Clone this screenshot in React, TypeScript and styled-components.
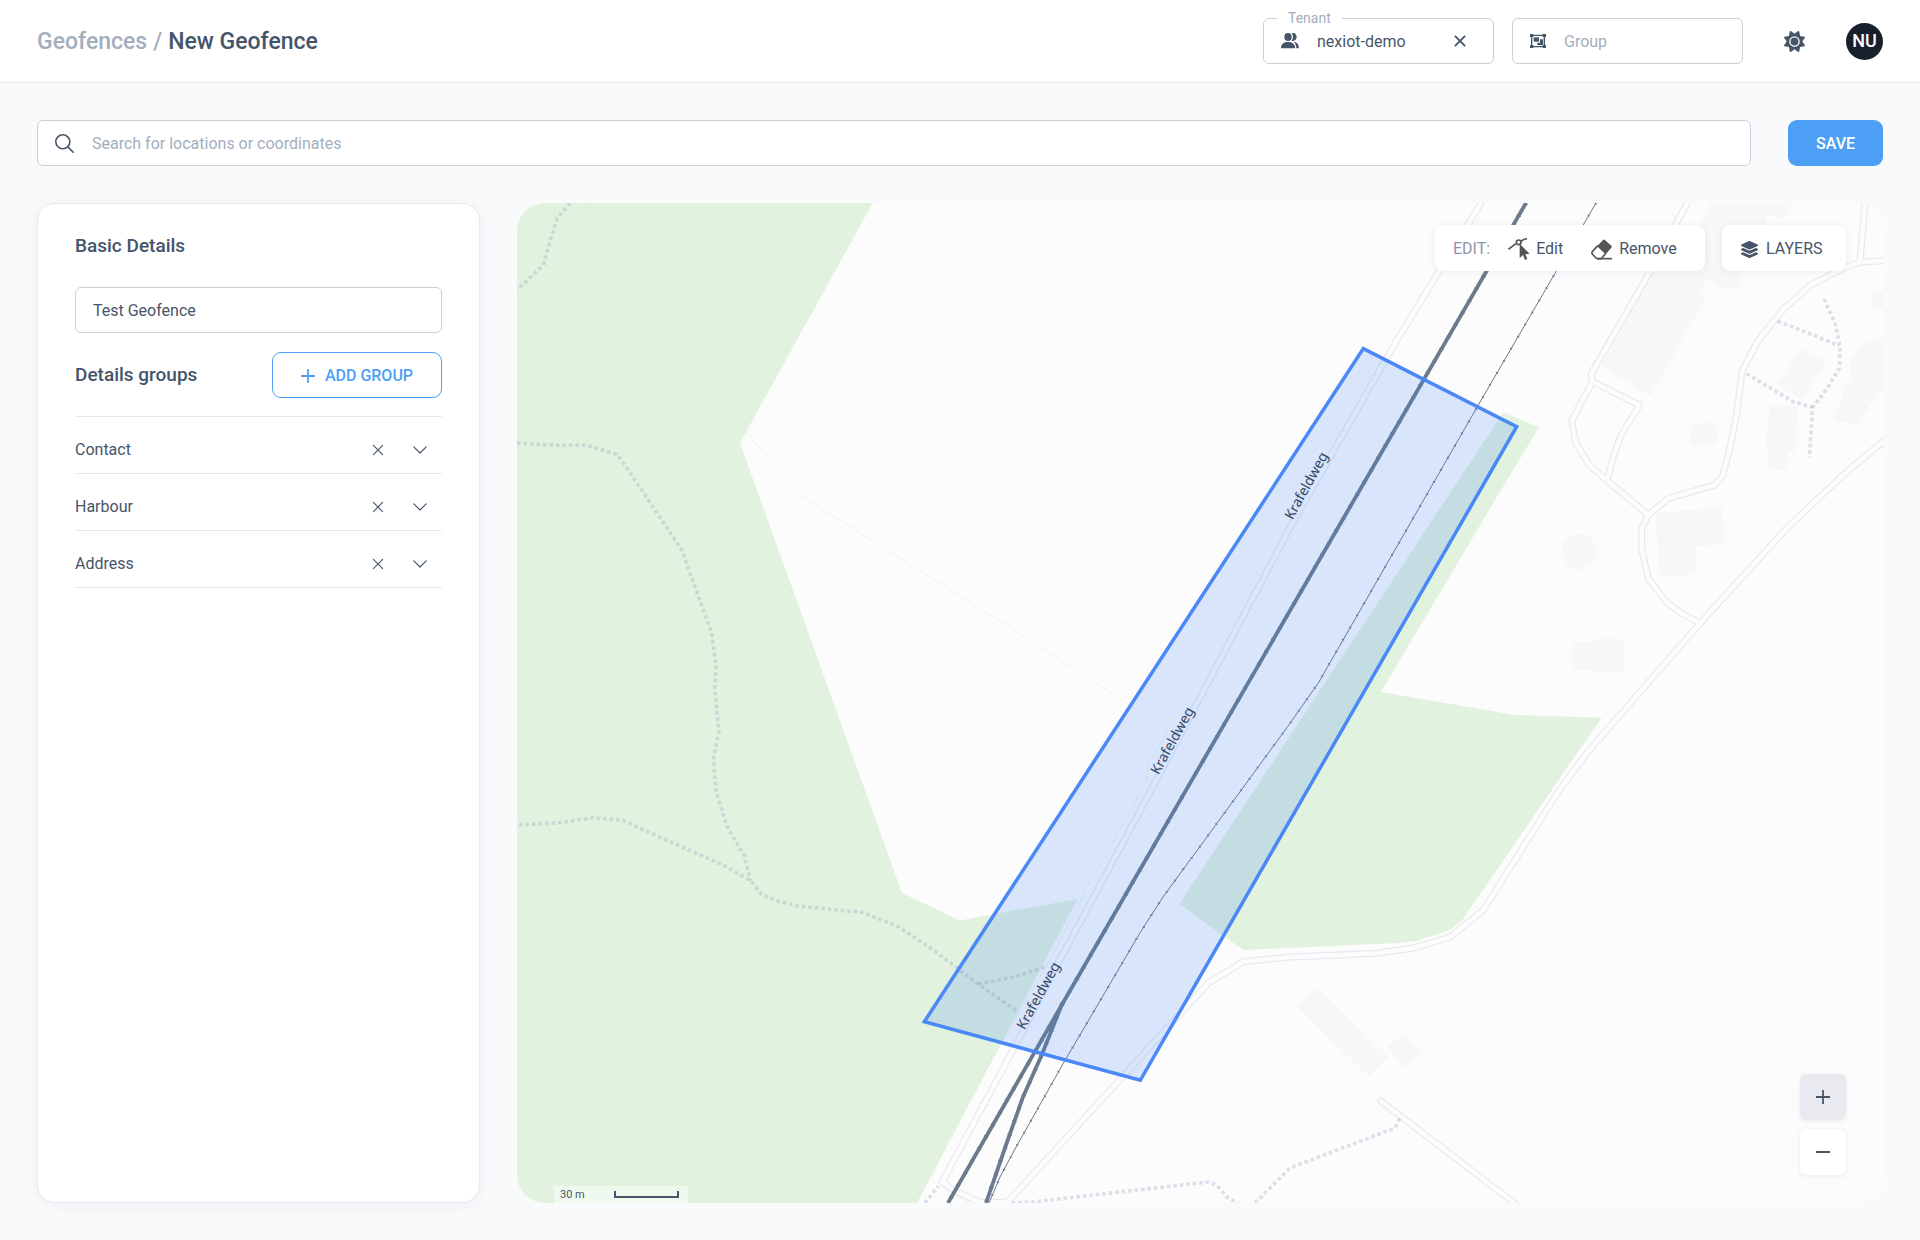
import React, { useState } from "react";
import styled, { createGlobalStyle } from "styled-components";
import { FaSun } from "react-icons/fa6";
import { FaLayerGroup } from "react-icons/fa";

const color = {
  text: "#475569",
  heading: "#44546a",
  muted: "#a3aebd",
  border: "#c8d0da",
  line: "#e6e9f0",
  page: "#f9fafc",
  primary: "#4d9ff6",
  white: "#ffffff",
};

const GlobalStyle = createGlobalStyle`
  *, *::before, *::after { box-sizing: border-box; }
  body {
    margin: 0;
    background: ${color.page};
    color: ${color.text};
    font-family: Roboto, "Liberation Sans", sans-serif;
    font-size: 16px;
    line-height: 24px;
  }
  button, input { font: inherit; color: inherit; }
  button { cursor: pointer; }
  svg { display: block; flex: none; }
`;

const Page = styled.div`
  display: flex;
  flex-direction: column;
  min-height: 100vh;
`;

const Header = styled.header`
  display: flex;
  align-items: center;
  justify-content: space-between;
  height: 83px;
  padding: 0 37px;
  background: ${color.white};
  border-bottom: 1px solid ${color.line};
`;

const Breadcrumb = styled.nav`
  display: flex;
  gap: 6px;
  padding-top: 2px;
  font-size: 23px;
  font-weight: 500;
  line-height: 28px;
  color: ${color.muted};
`;

const CrumbLink = styled.a`
  color: inherit;
  text-decoration: none;
`;

const PageTitle = styled.h1`
  margin: 0;
  font: inherit;
  color: ${color.heading};
`;

const HeaderTools = styled.div`
  display: flex;
  align-items: center;
  gap: 18px;
`;

const Field = styled.div<{ $width?: string }>`
  position: relative;
  display: flex;
  align-items: center;
  gap: 18px;
  width: ${(p) => p.$width ?? "100%"};
  height: 46px;
  padding: 0 18px 0 17px;
  background: ${color.white};
  border: 1px solid ${color.border};
  border-radius: 6px;
`;

const FloatingLabel = styled.label`
  position: absolute;
  top: -10px;
  left: 13px;
  padding: 0 11px;
  background: ${color.white};
  color: ${color.muted};
  font-size: 14px;
  line-height: 18px;
`;

const TextInput = styled.input`
  flex: 1;
  width: 0;
  min-width: 0;
  height: 100%;
  padding: 0;
  border: 0;
  outline: 0;
  background: transparent;
  &::placeholder {
    color: ${color.muted};
    opacity: 1;
  }
`;

const IconButton = styled.button<{ $size: number }>`
  display: flex;
  align-items: center;
  justify-content: center;
  width: ${(p) => p.$size}px;
  height: ${(p) => p.$size}px;
  padding: 0;
  border: 0;
  border-radius: 50%;
  background: transparent;
`;

const Account = styled.div`
  display: flex;
  align-items: center;
  gap: 29px;
  padding-left: 10px;
`;

const Avatar = styled.button`
  width: 37px;
  height: 37px;
  padding: 0;
  border: 0;
  border-radius: 50%;
  background: #18202b;
  color: ${color.white};
  font-size: 18px;
  font-weight: 500;
`;

const Main = styled.main`
  flex: 1;
  display: flex;
  flex-direction: column;
  gap: 37px;
  padding: 37px;
`;

const SearchRow = styled.form`
  display: flex;
  gap: 37px;
`;

const SaveButton = styled.button`
  flex: none;
  width: 95px;
  height: 46px;
  padding: 2px 0 0;
  border: 0;
  border-radius: 9px;
  background: ${color.primary};
  color: ${color.white};
  font-weight: 500;
`;

const Workspace = styled.div`
  flex: 1;
  display: grid;
  grid-template-columns: 443px minmax(0, 1fr);
  gap: 37px;
`;

const Panel = styled.section`
  padding: 29px 37px;
  background: ${color.white};
  border: 1px solid ${color.line};
  border-radius: 18px;
  box-shadow: 0 2px 18px rgba(30, 41, 59, 0.05);
`;

const PanelHeading = styled.h2`
  margin: 0;
  font-size: 19px;
  font-weight: 500;
  line-height: 26px;
  color: ${color.heading};
`;

const NameField = styled.div`
  padding: 28px 0 19px;
`;

const GroupsHeader = styled.div`
  display: flex;
  align-items: center;
  justify-content: space-between;
`;

const AddGroupButton = styled.button`
  display: flex;
  align-items: center;
  justify-content: center;
  gap: 10px;
  width: 170px;
  height: 46px;
  padding: 2px 0 0;
  border: 1px solid ${color.primary};
  border-radius: 9px;
  background: ${color.white};
  color: ${color.primary};
  font-weight: 500;
`;

const GroupList = styled.ul`
  margin: 18px 0 0;
  padding: 0;
  list-style: none;
  border-top: 1px solid ${color.line};
`;

const GroupRow = styled.li`
  display: flex;
  align-items: center;
  gap: 18px;
  height: 57px;
  padding: 10px 10px 0 0;
  border-bottom: 1px solid ${color.line};
`;

const GroupName = styled.span`
  flex: 1;
`;

const MapFrame = styled.section`
  position: relative;
  overflow: hidden;
  border-radius: 28px;
  background: #fcfcfd;
`;

const MapCanvas = styled.svg`
  position: absolute;
  inset: 0;
  width: 100%;
  height: 100%;
`;

const MapLabel = styled.text`
  font-family: "Noto Sans", sans-serif;
  font-size: 14px;
  fill: #33455f;
  text-anchor: middle;
`;

const MapTopBar = styled.div`
  position: absolute;
  top: 22px;
  right: 37px;
  display: flex;
  gap: 17px;
`;

const Card = styled.div`
  display: flex;
  align-items: center;
  height: 46px;
  border-radius: 9px;
  background: ${color.white};
  box-shadow: 0 1px 8px rgba(30, 41, 59, 0.07);
`;

const EditCard = styled(Card)`
  gap: 18px;
  width: 270px;
  padding: 2px 18px 0;
`;

const EditCaption = styled.span`
  color: #8b97a8;
`;

const ToolButton = styled.button`
  display: flex;
  align-items: center;
  gap: 6px;
  padding: 0;
  border: 0;
  background: transparent;
  & + & {
    margin-left: 10px;
  }
`;

const LayersButton = styled(Card).attrs({ as: "button" })`
  gap: 8px;
  width: 124px;
  padding: 2px 19px 0;
  border: 0;
`;

const ZoomControls = styled.div`
  position: absolute;
  right: 37px;
  bottom: 28px;
  display: flex;
  flex-direction: column;
  gap: 9px;
`;

const ZoomButton = styled.button<{ $active?: boolean }>`
  display: flex;
  align-items: center;
  justify-content: center;
  width: 46px;
  height: 46px;
  padding: 0;
  border: 0;
  border-radius: 6px;
  background: ${(p) => (p.$active ? "#e8eaf0" : color.white)};
  box-shadow: 0 1px 5px rgba(30, 41, 59, 0.08);
`;

const ScaleBox = styled.div`
  position: absolute;
  left: 37px;
  bottom: 0;
  display: flex;
  align-items: center;
  justify-content: space-between;
  width: 134px;
  height: 17px;
  padding: 0 9px 0 6px;
  background: rgba(255, 255, 255, 0.5);
  font-size: 11px;
  line-height: 17px;
  color: #4b5563;
`;

const ScaleBar = styled.span`
  width: 65px;
  height: 7px;
  border: 2px solid ${color.text};
  border-top: 0;
`;

/* ---------- icons ---------- */

const PeopleIcon = () => (
  <svg width="18" height="16" viewBox="0 0 54 48" fill="currentColor" aria-hidden="true">
    <ellipse cx="21" cy="12" rx="11" ry="12" />
    <path d="M0 46C0 32 9 27 21 27s21 5 21 19z" />
    <path d="M32 1c8-3 15 3 15 11s-7 14-15 11c5-6 5-16 0-22z" />
    <path d="M38 27c10 1 16 7 16 19h-8c0-9-3-15-8-19z" />
  </svg>
);

const GroupIcon = () => (
  <svg width="16" height="14" viewBox="0 0 48 42" fill="currentColor" aria-hidden="true">
    <path d="M5 4h38v34H5z" fill="none" stroke="currentColor" strokeWidth="4" />
    <path d="M0 0h10v9H0zM38 0h10v9H38zM0 33h10v9H0zM38 33h10v9H38z" />
    <path d="M11 10h16v13H11z" />
    <path d="M30 16h9v17H22v-7h8z" />
  </svg>
);

const SearchIcon = () => (
  <svg width="19" height="19" viewBox="0 0 19 19" fill="none" stroke="currentColor" strokeWidth="1.6" strokeLinecap="round" aria-hidden="true">
    <circle cx="7.8" cy="7.8" r="7" />
    <path d="M12.9 12.9l5.3 5.3" />
  </svg>
);

const CrossIcon = ({ weight }: { weight: number }) => (
  <svg width="12" height="12" viewBox="0 0 12 12" fill="none" stroke="currentColor" strokeWidth={weight} strokeLinecap="round" aria-hidden="true">
    <path d="M1.4 1.4l9.2 9.2M10.6 1.4l-9.2 9.2" />
  </svg>
);

const ChevronIcon = () => (
  <svg width="14" height="8" viewBox="0 0 14 8" fill="none" stroke="currentColor" strokeWidth="1.2" strokeLinecap="round" strokeLinejoin="round" aria-hidden="true">
    <path d="M.8.8L7 7 13.2.8" />
  </svg>
);

const PlusIcon = ({ size, minus }: { size: number; minus?: boolean }) => (
  <svg width={size} height={size} viewBox="0 0 14 14" fill="none" stroke="currentColor" strokeWidth="1.8" aria-hidden="true">
    <path d={minus ? "M0 7h14" : "M0 7h14M7 0v14"} />
  </svg>
);

const EditVertexIcon = () => (
  <svg width="22" height="22" viewBox="0 0 66 66" fill="#555" aria-hidden="true">
    <path d="M1 34c8-5 15-11 22-17M39 10c5-5 10-7 18-8" fill="none" stroke="#555" strokeWidth="5" />
    <path d="M35 18v42l10-9 6 15 7-3-6-14 13-2z" />
    <circle cx="32" cy="13" r="7" fill="#fff" stroke="#555" strokeWidth="5" />
  </svg>
);

const EraserIcon = () => (
  <svg width="22" height="21" viewBox="0 0 66 63" aria-hidden="true">
    <path d="M36 3q3-3 6 0l19 17q3 3 0 6L44 46 18 22z" fill="#555" />
    <path d="M20 20L4 38q-3 4 0 7l11 12q2 2 5 2h11l13-16" fill="none" stroke="#555" strokeWidth="5" strokeLinejoin="round" />
    <path d="M18 59h45" stroke="#555" strokeWidth="5" />
  </svg>
);

/* ---------- map data ---------- */

const woods = [
  "517,203 872.7,203 740,443 902,893 960,920.4 1077.5,899 917,1203 517,1203",
  "1503.3,412.3 1539,427.3 1495,500 1400,660 1381,692 1515,715 1601.7,717.7 1461.7,920.7 1450,930 1416.7,940.7 1400,943 1243.3,950 1179.3,904",
];

const buildings = [
  "1711,203 1791.7,203 1785,219 1766.7,214 1766,223 1741,275 1739,290 1720,287 1706,278 1700,291.7 1706,296.7 1650.7,395.7 1601,366.7 1651,276 1700,225",
  "1801.7,347.3 1826,362.3 1801.7,400 1777.3,384.3",
  "1770,404.3 1799,407.3 1794.3,452.3 1788.3,452.3 1786.7,470.7 1768.3,469 1769.3,450.7 1765,450",
  "1691.7,424.3 1701.7,425.7 1702.7,422.3 1715.7,423.3 1715,430 1719,431 1717.3,444 1701.7,442.7 1701,446 1690,445",
  "1883,338.3 1861,343.3 1849.3,362.3 1852.7,383.3 1845,386 1834,420 1860,425 1862.3,413.3 1866.7,414.3 1870,403.3 1873.3,404 1876,393.3 1883,391.7",
  "1872.3,292.3 1883,292 1883,309 1872.3,307.7",
  "1655,512.7 1721.7,507.3 1725,543.3 1695,546.7 1697.3,574.3 1660,577.3",
  "1579,533.3 1591,537.3 1597,551.7 1592.7,564.3 1579,570.3 1566.7,565 1560.7,551.7 1565,539.3",
  "1572.7,642.3 1591.7,642.3 1591.7,640.7 1602.7,640.7 1602.7,638 1613.3,638 1613.3,640.7 1624.7,640.7 1624.7,671 1591.7,671 1591.7,669.7 1572.7,669.7",
  "1317.7,987.3 1388.3,1056.7 1368.3,1076 1297.7,1006.7",
  "1403.3,1033.3 1421.7,1051.7 1404.3,1066.7 1386.7,1048.3",
];

const roads = [
  "1481,203 1397,340 1293,522 1193,711 1157,779 1103,880 1057,965 1020,1037 942.3,1181.7 953.3,1190 978,1201.7 1006.7,1202.5",
  "1004,1206 1186.7,1006.7 1208,983.3 1243.3,961.7 1286.7,957.3 1376.7,953.3 1415,947.7 1450.7,936.7 1483.3,910 1558.3,791.7 1586.7,753.3 1700,623.3 1788.3,526.7 1845,473.3 1885,440",
  "1689,200 1650,271.7 1591,374.3 1592.7,381.7 1571.7,420.7 1575.7,442.7 1589.3,465 1607.3,481 1628.3,498 1648.3,515",
  "1592.7,381.7 1639.3,405 1620.7,436 1613.3,456.7 1607.3,480",
  "1865.3,200 1860,262.3",
  "1886,260.5 1860,262.3 1846.7,266.7 1810.7,285 1783.3,309.3 1757.3,341.7 1742,371.7 1736.7,413.3 1731.7,440 1722.7,476 1714,485.3 1668.3,498.3 1648.3,515 1641.7,528.3 1641.7,549.3 1648.3,578.3 1667.7,603.3 1681.7,613.3 1700,623.3",
  "1380.7,1101 1517,1205",
];

const footpaths = [
  "570,203 557.3,218.3 550,241.7 543.3,265 517,290",
  "517,443 556.7,445.3 586.7,445.3 616.7,454.3 625,465 681.7,550 711.7,633.3 716,666.7 714.7,686.7 716.7,710 719,731.7 713.3,758.5 716,791 726.7,825.7 744,855 750.7,880.8",
  "519,824.7 556.7,823 593.3,817.8 623.3,820.5 651.7,833.6 721.7,864.3 750.7,880.8 761.7,894.6 776.7,900.8 798,906 863,912.5 898,926.6 933,949.7 976.7,983 1018,1012",
  "978.3,984 1015,976.7 1048,966",
  "925,1203 938.3,1186",
  "1011.7,1203 1033,1202 1066.7,1198 1208,1182 1216.7,1185 1228,1198 1238,1203",
  "1255,1203 1290,1168 1395,1128 1400,1118",
  "1824,299 1835,323 1840,346.7 1839.3,368.3 1828.3,386.7 1812.7,407.3 1809.3,457.3",
  "1777.7,321.3 1813.3,335 1839,345.7",
  "1746.7,373.7 1793.3,401.7 1812.7,407.3",
];

const boundary =
  "590,203 597,238 605.7,263 657,324 675,360 700,380 745.7,431.7 800,495 1020,634 1130,705 1153,719 1168,731 1147,765 1146,783 1091,880 1057,947 943,1143 932,1180 968,1203";

const mainRails = [
  "1526,203 1134,880 1060,1008 948,1203",
  "1062,1004 1041.7,1055 1023,1097 1006.7,1143 986,1203",
];

const sideRail =
  "1596,203 1478.3,405 1318.3,683 1287,727.5 1163,897 1140.7,931.7 1063.3,1063.3 1015,1149 1000,1177 989,1203";

const geofence = "1363.3,348.6 1516.7,426.7 1140.3,1080.3 924.3,1021.7";

const streetLabels = [
  [1307, 486],
  [1173, 741],
  [1039, 996],
];

const MapDrawing = () => (
  <MapCanvas viewBox="517 203 1366 1000" preserveAspectRatio="xMidYMid slice" role="img" aria-label="Map with geofence">
    <g fill="#f7f7f8">
      {buildings.map((p) => <polygon key={p} points={p} />)}
    </g>
    <g fill="#e1f2de">
      {woods.map((p) => <polygon key={p} points={p} />)}
    </g>
    <polyline points={boundary} fill="none" stroke="#dcebc8" strokeOpacity="0.6" strokeWidth="1" strokeDasharray="2 1" />
    <g fill="none" stroke="#e8e8f0" strokeWidth="7" strokeLinejoin="round" strokeLinecap="round">
      {roads.map((p) => <polyline key={p} points={p} />)}
    </g>
    <g fill="none" stroke="#fcfcfd" strokeWidth="4.6" strokeLinejoin="round" strokeLinecap="round">
      {roads.map((p) => <polyline key={p} points={p} />)}
    </g>
    <g fill="none" stroke="#97a3ba" strokeOpacity="0.32" strokeWidth="3.6" strokeDasharray="3.6 2.9">
      {footpaths.map((p) => <polyline key={p} points={p} />)}
    </g>
    <g fill="none" stroke="#6b7a8e">
      {mainRails.map((p) => <polyline key={p} points={p} strokeWidth="3.8" />)}
      {mainRails.map((p) => <polyline key={p} points={p} strokeWidth="4.4" strokeDasharray="1.4 12.6" />)}
      <polyline points={sideRail} strokeWidth="1" />
      <polyline points={sideRail} strokeWidth="2.4" strokeDasharray="1.2 12.8" />
    </g>
    <polygon points={geofence} fill="#3b82f6" fillOpacity="0.18" stroke="#4a88f8" strokeWidth="3.5" />
    {streetLabels.map(([x, y]) => (
      <MapLabel key={y} transform={`translate(${x} ${y}) rotate(-61)`} y="4">
        Krafeldweg
      </MapLabel>
    ))}
  </MapCanvas>
);

export default function App() {
  const [tenant, setTenant] = useState("nexiot-demo");
  const [name, setName] = useState("Test Geofence");
  const [groups, setGroups] = useState(["Contact", "Harbour", "Address"]);

  return (
    <Page>
      <GlobalStyle />
      <Header>
        <Breadcrumb aria-label="Breadcrumb">
          <CrumbLink href="#geofences">Geofences</CrumbLink>
          <span>/</span>
          <PageTitle>New Geofence</PageTitle>
        </Breadcrumb>
        <HeaderTools>
          <Field $width="231px">
            <FloatingLabel htmlFor="tenant">Tenant</FloatingLabel>
            <PeopleIcon />
            <TextInput id="tenant" value={tenant} onChange={(e) => setTenant(e.target.value)} />
            <IconButton $size={30} type="button" aria-label="Clear tenant" onClick={() => setTenant("")}>
              <CrossIcon weight={1.9} />
            </IconButton>
          </Field>
          <Field $width="231px">
            <GroupIcon />
            <TextInput aria-label="Group" placeholder="Group" />
          </Field>
          <Account>
            <IconButton $size={46} type="button" aria-label="Toggle theme">
              <FaSun size={21} />
            </IconButton>
            <Avatar type="button" aria-label="Account">NU</Avatar>
          </Account>
        </HeaderTools>
      </Header>

      <Main>
        <SearchRow onSubmit={(e) => e.preventDefault()}>
          <Field>
            <SearchIcon />
            <TextInput aria-label="Search" placeholder="Search for locations or coordinates" />
          </Field>
          <SaveButton type="submit">SAVE</SaveButton>
        </SearchRow>

        <Workspace>
          <Panel>
            <PanelHeading>Basic Details</PanelHeading>
            <NameField>
              <Field>
                <TextInput aria-label="Geofence name" value={name} onChange={(e) => setName(e.target.value)} />
              </Field>
            </NameField>
            <GroupsHeader>
              <PanelHeading>Details groups</PanelHeading>
              <AddGroupButton type="button">
                <PlusIcon size={14} />
                ADD GROUP
              </AddGroupButton>
            </GroupsHeader>
            <GroupList>
              {groups.map((group) => (
                <GroupRow key={group}>
                  <GroupName>{group}</GroupName>
                  <IconButton
                    $size={24}
                    type="button"
                    aria-label={`Remove ${group}`}
                    onClick={() => setGroups(groups.filter((g) => g !== group))}
                  >
                    <CrossIcon weight={1.1} />
                  </IconButton>
                  <IconButton $size={24} type="button" aria-label={`Expand ${group}`}>
                    <ChevronIcon />
                  </IconButton>
                </GroupRow>
              ))}
            </GroupList>
          </Panel>

          <MapFrame>
            <MapDrawing />
            <MapTopBar>
              <EditCard>
                <EditCaption>EDIT:</EditCaption>
                <ToolButton type="button">
                  <EditVertexIcon />
                  Edit
                </ToolButton>
                <ToolButton type="button">
                  <EraserIcon />
                  Remove
                </ToolButton>
              </EditCard>
              <LayersButton>
                <FaLayerGroup size={17} />
                LAYERS
              </LayersButton>
            </MapTopBar>
            <ZoomControls>
              <ZoomButton $active type="button" aria-label="Zoom in">
                <PlusIcon size={14} />
              </ZoomButton>
              <ZoomButton type="button" aria-label="Zoom out">
                <PlusIcon size={14} minus />
              </ZoomButton>
            </ZoomControls>
            <ScaleBox>
              30 m
              <ScaleBar />
            </ScaleBox>
          </MapFrame>
        </Workspace>
      </Main>
    </Page>
  );
}
